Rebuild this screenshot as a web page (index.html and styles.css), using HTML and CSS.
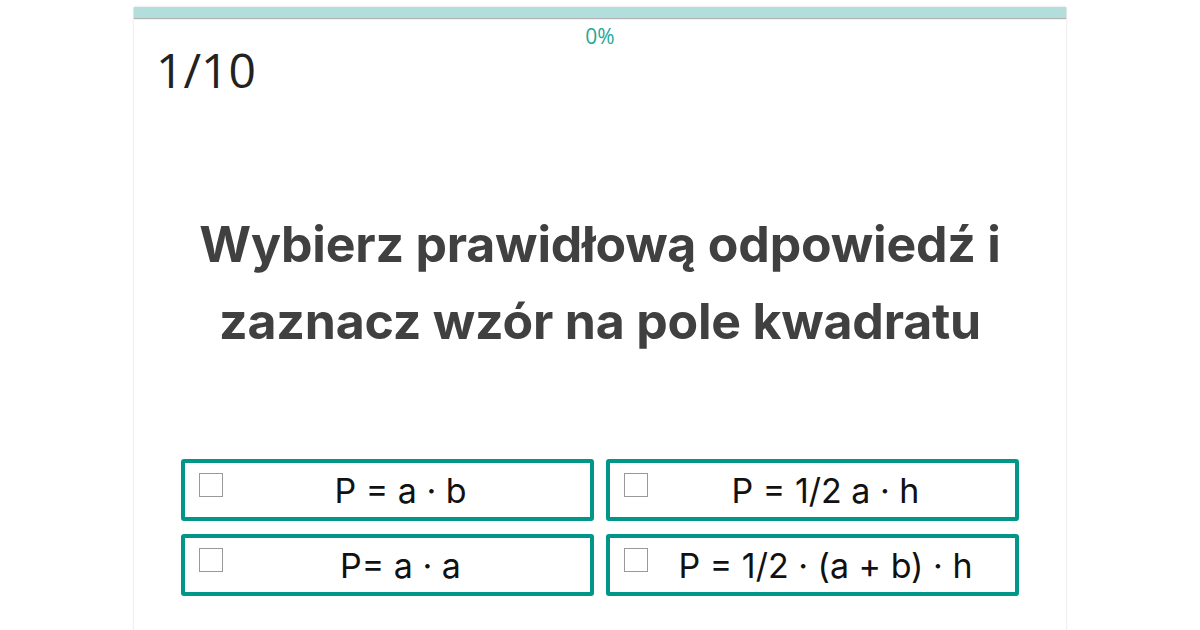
FILE: index.html
```html
<!DOCTYPE html>
<html lang="pl">
<head>
<meta charset="utf-8">
<link rel="stylesheet" href="styles.css">
</head>
<body>
<div class="card">
  <div class="progress"><div class="progress-fill"></div></div>
  <div class="percent">0%</div>
  <div class="counter">1/10</div>
  <h1 class="question">Wybierz prawidłową odpowiedź i<br>zaznacz wzór na pole kwadratu</h1>
  <div class="options">
    <label class="option"><span class="box"></span><span class="text">P = a · b</span></label>
    <label class="option"><span class="box"></span><span class="text">P = 1/2 a · h</span></label>
    <label class="option"><span class="box"></span><span class="text">P= a · a</span></label>
    <label class="option"><span class="box"></span><span class="text">P = 1/2 · (a + b) · h</span></label>
  </div>
</div>
</body>
</html>
```
FILE: styles.css
```css
html, body {
  margin: 0;
  padding: 0;
  background: #ffffff;
  height: 630px;
  overflow: hidden;
}
.card {
  width: 932px;
  margin: 7px auto 0;
  background: #fff;
  box-shadow: 0 0 2px rgba(0,0,0,0.18);
  height: 640px;
  font-family: "Open Sans", sans-serif;
}
.progress {
  height: 11px;
  background: #b2dfdb;
  box-shadow: 0 1px 1px rgba(0,0,0,0.3);
}
.progress-fill {
  width: 0;
  height: 100%;
  background: #009688;
}
.percent {
  text-align: center;
  color: #26a69a;
  font-size: 21px;
  line-height: 24px;
  margin-top: 6px;
}
.counter {
  font-size: 48px;
  line-height: 56px;
  color: #222;
  padding-left: 22px;
  margin-top: -6px;
}
.question {
  font-family: Inter, "Noto Sans", sans-serif;
  font-weight: 700;
  font-size: 50px;
  line-height: 77px;
  color: #404040;
  text-align: center;
  margin: 108px 0 0;
  letter-spacing: -0.2px;
}
.options {
  display: grid;
  grid-template-columns: 413px 413px;
  column-gap: 12px;
  row-gap: 13px;
  padding-left: 47px;
  margin-top: 99px;
}
.option {
  height: 62px;
  box-sizing: border-box;
  border: 4px solid #009688;
  border-radius: 3px;
  display: flex;
  align-items: center;
  position: relative;
  font-family: Inter, "Noto Sans", sans-serif;
  font-size: 34px;
  color: #111;
}
.box {
  position: absolute;
  left: 14px;
  top: 10px;
  width: 22px;
  height: 22px;
  border: 1px solid #999;
  background: #fff;
}
.text {
  flex: 1;
  text-align: center;
  padding-left: 26px;
}
```
